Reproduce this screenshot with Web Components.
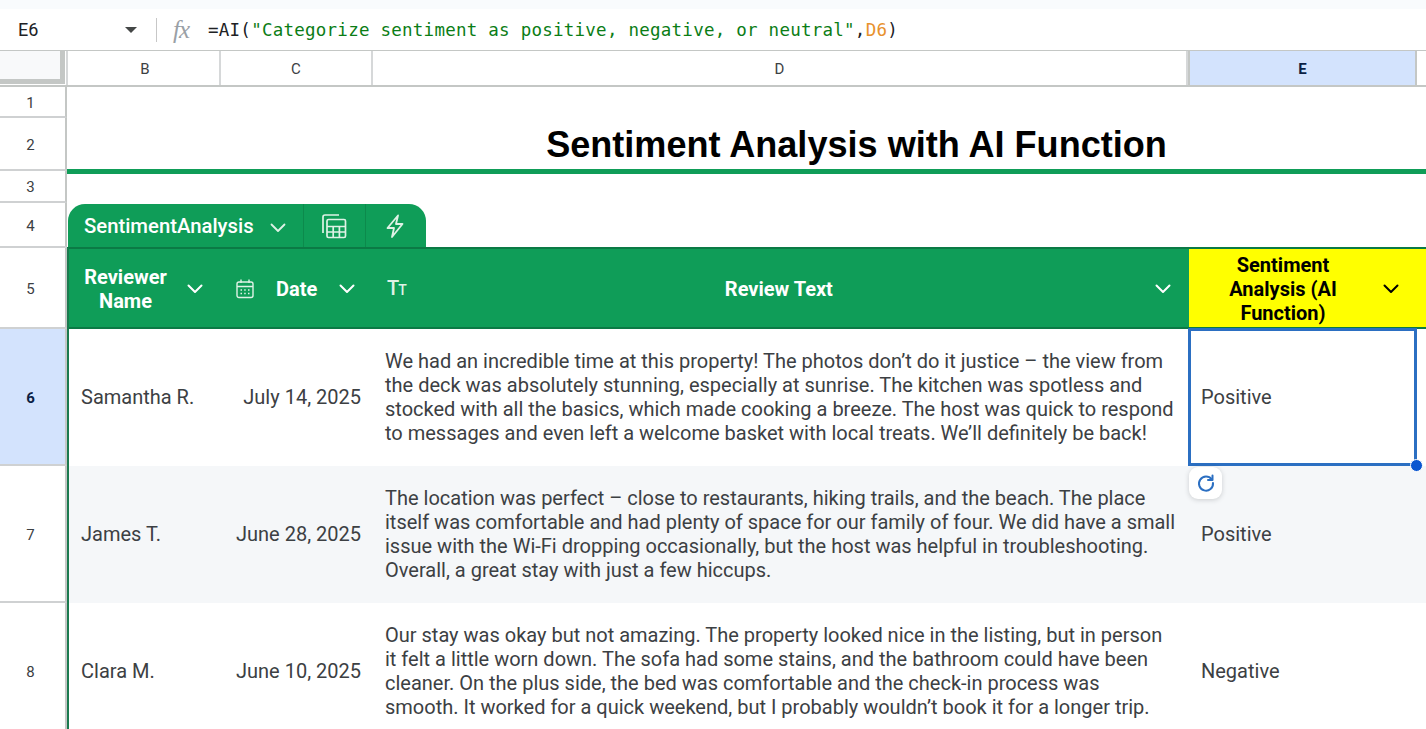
<!DOCTYPE html>
<html>
<head>
<meta charset="utf-8">
<style>
    html, body { margin: 0; padding: 0; background: #fff; overflow: hidden; }
    body { width: 1426px; height: 729px; font-family: Roboto, "Liberation Sans", sans-serif; }
</style>
</head>
<body>
<sheet-app></sheet-app>
<script>
const chevron = (color, w = 2) => `<svg class="ch" width="16" height="16" viewBox="0 0 16 16" fill="none" stroke="${color}" stroke-width="${w}" stroke-linecap="round" stroke-linejoin="round"><path d="M1.5 4.500 8 11l6.500-6.500"/></svg>`

class FormulaBar extends HTMLElement {
    connectedCallback() {
        this.attachShadow({mode: 'open'}).innerHTML = `
        <style>
            :host { display: block; height: 51px; box-sizing: border-box; padding-top: 9px; background: #fff; border-bottom: 1px solid #c4c7c5; }
            .top { position: absolute; left: 0; top: 0; width: 100%; height: 9px; background: #f9fbfd; }
            .row { display: flex; align-items: center; height: 41px; }
            .ref { width: 125px; padding-left: 18px; box-sizing: border-box; font: 18px Roboto, sans-serif; color: #202124; }
            .caret { width: 0; height: 0; border-left: 6px solid transparent; border-right: 6px solid transparent; border-top: 6px solid #444746; margin-right: 19px; }
            .sep { width: 1px; height: 24px; background: #c7c7c7; margin-right: 16px; }
            .fx { width: 35px; font: italic 25px "Liberation Serif", serif; color: #9aa0a6; letter-spacing: -1px; }
            .f { font: 17.5px "DejaVu Sans Mono", "Liberation Mono", monospace; color: #202124; white-space: pre; letter-spacing: .245px; }
            .s { color: #0b7d16; } .d { color: #e8912d; }
        </style>
        <div class="top"></div>
        <div class="row">
            <div class="ref">E6</div><div class="caret"></div><div class="sep"></div><div class="fx">fx</div>
            <div class="f">=AI(<span class="s">"Categorize sentiment as positive, negative, or neutral"</span>,<span class="d">D6</span>)</div>
        </div>`
    }
}

class ColHeader extends HTMLElement {
    connectedCallback() {
        this.attachShadow({mode: 'open'}).innerHTML = `
        <style>
            :host { display: grid; grid-template-columns: 65px 3px 153px 152px 815px 229px 9px; height: 36px; box-sizing: border-box; border-bottom: 2px solid #c4c7c5; font: 15px Roboto, sans-serif; color: #3c4043; }
            div { display: flex; align-items: center; justify-content: center; border-right: 2px solid #d6d8d9; padding-top: 1px; }
            .corner { background: #f8f9fa; border-right: 5px solid #c4c7c5; border-bottom: 5px solid #c4c7c5; margin-bottom: 1px; }
            .gap { background: #fff; }
            .b { padding-left: 3px; }
            .sel { background: #d3e3fd; color: #0b1f44; font-weight: 700; border-left: 2px solid #c4c7c5; border-right: 2px solid #c4c7c5; }
            .end { border: 0; }
        </style>
        <div class="corner"></div><div class="gap"></div><div class="b">B</div><div>C</div><div>D</div><div class="sel">E</div><div class="end"></div>`
    }
}

class RowHead extends HTMLElement {
    connectedCallback() {
        this.attachShadow({mode: 'open'}).innerHTML = `
        <style>
            :host { display: flex; align-items: center; justify-content: center; box-sizing: border-box; width: 67px; padding: 2px 4px 0 0; flex: none; border-right: 2px solid #c4c7c5; border-bottom: 2px solid #cfd1d2; font: 15px Roboto, sans-serif; color: #3c4043; }
            :host([sel]) { background: #d3e3fd; color: #0b1f44; font-weight: 700; }
        </style><slot></slot>`
    }
}

class TableHead extends HTMLElement {
    connectedCallback() {
        const cal = `<svg width="18" height="20" viewBox="0 0 18 20" fill="none" stroke="#dff2e6" stroke-width="1.4"><rect x="1" y="3" width="16" height="15.500" rx="2"/><path d="M1 7.500h16M5 .5v3.500M13 .5v3.500"/><path d="M4.500 11h1.500M8.200 11h1.500M12 11h1.500M4.500 14.500h1.500M8.200 14.500h1.500M12 14.500h1.500" stroke-width="1.3"/></svg>`
        this.attachShadow({mode: 'open'}).innerHTML = `
        <style>
            :host { display: grid; grid-template-columns: 153px 152px 817px 237px; margin-top: -1px; box-sizing: border-box; border-top: 2px solid #0b7a45; border-bottom: 2px solid #0b7a45; background: #0f9d58; color: #fff; font: 700 20px/24px Roboto, sans-serif; }
            .c { display: flex; align-items: center; min-width: 0; padding-top: 2px; }
            .t { text-align: center; }
            .name { padding-left: 17px; }
            .name .t { width: 83px; }
            .name .ch { margin-left: 20px; }
            .date { padding-left: 16px; }
            .date .t { margin-left: 22px; }
            .date .ch { margin-left: 22px; }
            .text { padding-left: 15px; }
            .tt { font: 500 20px Roboto, sans-serif; color: #dff2e6; letter-spacing: -1px; padding-bottom: 2px; }
            .tt small { font-size: 14px; font-weight: 500; }
            .text .t { flex: 1; padding-right: 3px; }
            .text .ch { margin-right: 18px; }
            .ai { background: #ff0; color: #000; padding-left: 36px; }
            .ai .t { width: 116px; }
            .ai .ch { margin-left: 42px; }
        </style>
        <div class="c name"><div class="t">Reviewer Name</div>${chevron('#fff')}</div>
        <div class="c date">${cal}<div class="t">Date</div>${chevron('#fff')}</div>
        <div class="c text"><span class="tt">T<small>T</small></span><div class="t">Review Text</div>${chevron('#fff')}</div>
        <div class="c ai"><div class="t">Sentiment Analysis (AI Function)</div>${chevron('#000')}</div>`
    }
}

class TableTab extends HTMLElement {
    connectedCallback() {
        this.attachShadow({mode: 'open'}).innerHTML = `
        <style>
            :host { display: inline-flex; height: 43px; box-sizing: border-box; background: #0f9d58; border-radius: 17px 17px 0 0; color: #fff; font: 500 20.3px Roboto, sans-serif; align-items: stretch; }
            .a { display: flex; align-items: center; width: 235px; box-sizing: border-box; padding-left: 16px; }
            .a .ch { margin-left: 16px; margin-top: 5px; }
            .b { display: flex; align-items: center; justify-content: center; width: 61px; border-left: 1px solid #0c8a4c; }
            .b + .b { width: 60px; }
            .b svg { margin-left: -2px; }
        </style>
        <div class="a">SentimentAnalysis${chevron('#dff2e6', 1.8)}</div>
        <div class="b"><svg width="26" height="26" viewBox="0 0 26 26" fill="none" stroke="#dff2e6" stroke-width="1.7"><path d="M2 20V4a2 2 0 0 1 2-2h14"/><rect x="6" y="6.500" width="18.500" height="18" rx="1.500"/><path d="M6 13.500h18.500M6 19h18.500M12.200 13.500v11M18.400 13.500v11"/></svg></div>
        <div class="b"><svg width="20" height="26" viewBox="0 0 20 26" fill="none" stroke="#dff2e6" stroke-width="1.8" stroke-linejoin="round"><path d="M13 2.500 2.500 15h6.500l-2 9L17.500 11h-6.500z"/></svg></div>`
    }
}

class DataRow extends HTMLElement {
    connectedCallback() {
        this.attachShadow({mode: 'open'}).innerHTML = `
        <style>
            :host { display: grid; grid-template-columns: 153px 152px 816px 238px; box-sizing: border-box; min-height: 0; background: var(--bg, #fff); font: 20px/24px Roboto, sans-serif; color: #3c4043; }
            .c { display: flex; align-items: center; box-sizing: border-box; min-width: 0; padding-bottom: 2px; }
            .n { padding-left: 14px; }
            .d { justify-content: flex-end; padding-right: 11px; }
            .r { padding-left: 13px; white-space: pre-line; }
            .s { padding-left: 13px; }
        </style>
        <div class="c n"><slot name="name"></slot></div>
        <div class="c d"><slot name="date"></slot></div>
        <div class="c r"><slot name="review"></slot></div>
        <div class="c s"><slot name="sent"></slot></div>`
    }
}

class SelBox extends HTMLElement {
    connectedCallback() {
        this.attachShadow({mode: 'open'}).innerHTML = `
        <style>
            :host { position: absolute; left: 1188px; top: 328px; width: 229px; height: 138px; box-sizing: border-box; border: 3px solid #2b6fc2; }
            .dot { position: absolute; right: -9px; bottom: -9px; width: 11px; height: 11px; border-radius: 50%; background: #0b57d0; border: 1px solid #fff; }
            .btn { position: absolute; left: -2px; top: 136px; width: 33px; height: 32px; background: #fff; border-radius: 9px; box-shadow: 0 1px 5px rgba(60,64,67,.22); display: flex; align-items: center; justify-content: center; }
        </style>
        <div class="dot"></div>
        <div class="btn"><svg width="20" height="20" viewBox="0 0 20 20" fill="none" stroke="#2b6fc2" stroke-width="2" stroke-linecap="round"><path d="M15.700 6.500A7 7 0 1 0 17 10"/><path d="M16.500 2.500v4.500H12" stroke-linejoin="round"/></svg></div>`
    }
}

class SheetApp extends HTMLElement {
    connectedCallback() {
        this.attachShadow({mode: 'open'}).innerHTML = `
        <style>
            :host { display: block; width: 1426px; height: 729px; overflow: hidden; position: relative; }
            .grid { display: grid; grid-template-columns: 67px 1359px; grid-template-rows: 31px 53px 32px 45px 81px 137px 137px 137px; }
            .title { display: flex; align-items: center; justify-content: center; font: 700 36.1px "Liberation Sans", Arial, sans-serif; color: #000; box-sizing: border-box; border-bottom: 5px solid #0f9d58; margin-bottom: -3px; padding-left: 220px; padding-top: 2px; }
            .tab { padding-left: 1px; display: flex; align-items: flex-end; padding-bottom: 1px; }
            .alt { --bg: #f5f7f9; }
            .left-line { position: absolute; left: 67px; top: 248px; bottom: 0; width: 2px; background: #1b7a4f; }
        </style>
        <formula-bar></formula-bar>
        <col-header></col-header>
        <div class="grid">
            <row-head>1</row-head><div></div>
            <row-head>2</row-head><div class="title">Sentiment Analysis with AI Function</div>
            <row-head>3</row-head><div></div>
            <row-head>4</row-head><div class="tab"><table-tab></table-tab></div>
            <row-head>5</row-head><table-head></table-head>
            <row-head sel>6</row-head>
            <data-row>
                <span slot="name">Samantha R.</span><span slot="date">July 14, 2025</span>
                <span slot="review">We had an incredible time at this property! The photos don’t do it justice – the view from
the deck was absolutely stunning, especially at sunrise. The kitchen was spotless and
stocked with all the basics, which made cooking a breeze. The host was quick to respond
to messages and even left a welcome basket with local treats. We’ll definitely be back!</span>
                <span slot="sent">Positive</span>
            </data-row>
            <row-head>7</row-head>
            <data-row class="alt">
                <span slot="name">James T.</span><span slot="date">June 28, 2025</span>
                <span slot="review">The location was perfect – close to restaurants, hiking trails, and the beach. The place
itself was comfortable and had plenty of space for our family of four. We did have a small
issue with the Wi-Fi dropping occasionally, but the host was helpful in troubleshooting.
Overall, a great stay with just a few hiccups.</span>
                <span slot="sent">Positive</span>
            </data-row>
            <row-head>8</row-head>
            <data-row>
                <span slot="name">Clara M.</span><span slot="date">June 10, 2025</span>
                <span slot="review">Our stay was okay but not amazing. The property looked nice in the listing, but in person
it felt a little worn down. The sofa had some stains, and the bathroom could have been
cleaner. On the plus side, the bed was comfortable and the check-in process was
smooth. It worked for a quick weekend, but I probably wouldn’t book it for a longer trip.</span>
                <span slot="sent">Negative</span>
            </data-row>
        </div>
        <div class="left-line"></div>
        <sel-box></sel-box>`
    }
}

customElements.define('formula-bar', FormulaBar)
customElements.define('col-header', ColHeader)
customElements.define('row-head', RowHead)
customElements.define('table-head', TableHead)
customElements.define('table-tab', TableTab)
customElements.define('data-row', DataRow)
customElements.define('sel-box', SelBox)
customElements.define('sheet-app', SheetApp)
</script>
</body>
</html>
